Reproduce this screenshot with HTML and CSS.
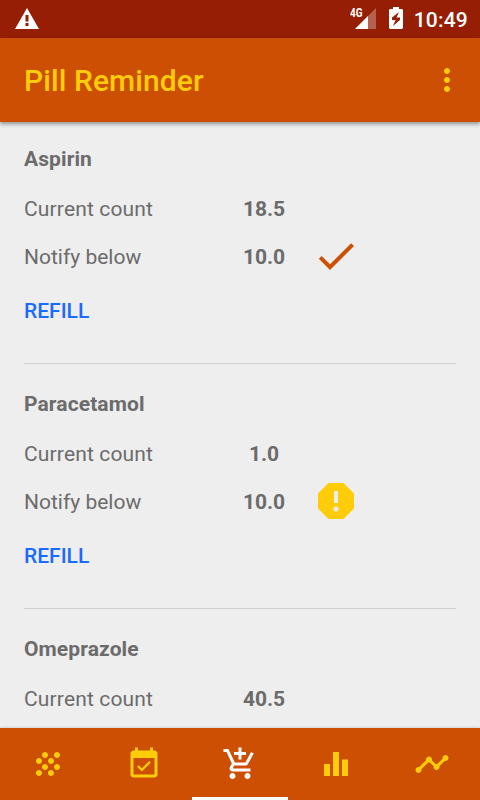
FILE: index.html
```html
<!DOCTYPE html>
<html lang="en">
<head>
    <meta charset="UTF-8">
    <meta name="viewport" content="width=device-width, initial-scale=1.0">
    <title>Pill Reminder</title>
    <link rel="stylesheet" href="styles.css">
</head>
<body>
    <div class="screen">
        <div class="status-bar">
            <svg class="status-warning" width="24" height="22" viewBox="0 0 24 22">
                <path fill="#fff" fill-rule="evenodd" d="M12 0L24 21H0zM10.500 7v6.500h3V7zM10.500 15v3h3v-3z"/>
            </svg>
            <div class="status-right">
                <div class="signal">
                    <span class="signal-type">4G</span>
                    <svg width="21" height="21" viewBox="0 0 21 21">
                        <path fill="#fff" fill-opacity="0.3" d="M21 0v21H0z"/>
                        <path fill="#fff" d="M13 8v13H0z"/>
                    </svg>
                </div>
                <svg class="battery" width="14" height="22" viewBox="0 0 14 22">
                    <path fill="#fff" fill-rule="evenodd" d="M4 0h6v2h3l1 1v18l-1 1H1l-1-1V3l1-1h3zM10 5L3 10.500V13h3.500L4 19l7-6v-2.500H7.500z"/>
                </svg>
                <span class="clock">10:49</span>
            </div>
        </div>

        <header class="app-bar">
            <h1>Pill Reminder</h1>
            <svg class="overflow" width="36" height="36" viewBox="0 0 24 24">
                <path d="M12 8c1.100 0 2-.9 2-2s-.9-2-2-2-2 .9-2 2 .9 2 2 2zm0 2c-1.100 0-2 .9-2 2s.9 2 2 2 2-.9 2-2-.9-2-2-2zm0 6c-1.100 0-2 .9-2 2s.9 2 2 2 2-.9 2-2-.9-2-2-2z"/>
            </svg>
        </header>

        <main class="medicines">
            <section class="medicine">
                <h2>Aspirin</h2>
                <div class="row">
                    <span class="label count">Current count</span>
                    <span class="value">18.5</span>
                </div>
                <div class="row">
                    <span class="label">Notify below</span>
                    <span class="value">10.0</span>
                    <svg class="state ok" width="48" height="48" viewBox="0 0 24 24">
                        <path d="M9 16.170L4.830 12l-1.420 1.410L9 19 21 7l-1.410-1.410z"/>
                    </svg>
                </div>
                <button class="refill">REFILL</button>
            </section>

            <section class="medicine">
                <h2>Paracetamol</h2>
                <div class="row">
                    <span class="label count">Current count</span>
                    <span class="value">1.0</span>
                </div>
                <div class="row">
                    <span class="label">Notify below</span>
                    <span class="value">10.0</span>
                    <svg class="state low" width="48" height="48" viewBox="0 0 24 24">
                        <path d="M15.730 3H8.270L3 8.270v7.460L8.270 21h7.460L21 15.730V8.270L15.730 3zM12 17.300c-.72 0-1.300-.58-1.300-1.300 0-.72.58-1.300 1.300-1.300.72 0 1.300.58 1.300 1.300 0 .72-.58 1.300-1.300 1.300zm1-4.300h-2V7h2v6z"/>
                    </svg>
                </div>
                <button class="refill">REFILL</button>
            </section>

            <section class="medicine">
                <h2>Omeprazole</h2>
                <div class="row">
                    <span class="label count">Current count</span>
                    <span class="value">40.5</span>
                </div>
            </section>
        </main>

        <nav class="tabs">
            <a class="tab">
                <svg width="36" height="36" viewBox="0 0 24 24">
                    <path d="M10 12c-1.100 0-2 .9-2 2s.9 2 2 2 2-.9 2-2-.9-2-2-2zM6 8c-1.100 0-2 .9-2 2s.9 2 2 2 2-.9 2-2-.9-2-2-2zm0 8c-1.100 0-2 .9-2 2s.9 2 2 2 2-.9 2-2-.9-2-2-2zm12-8c1.100 0 2-.9 2-2s-.9-2-2-2-2 .9-2 2 .9 2 2 2zm-4 8c-1.100 0-2 .9-2 2s.9 2 2 2 2-.9 2-2-.9-2-2-2zm4-4c-1.100 0-2 .9-2 2s.9 2 2 2 2-.9 2-2-.9-2-2-2zm-4-4c-1.100 0-2 .9-2 2s.9 2 2 2 2-.9 2-2-.9-2-2-2zm-4-4c-1.100 0-2 .9-2 2s.9 2 2 2 2-.9 2-2-.9-2-2-2z"/>
                </svg>
            </a>
            <a class="tab">
                <svg width="36" height="36" viewBox="0 0 24 24">
                    <path d="M16.530 11.060L15.470 10l-4.880 4.880-2.120-2.120-1.060 1.060L10.590 17l5.940-5.940zM19 3h-1V1h-2v2H8V1H6v2H5c-1.110 0-1.990.9-1.990 2L3 19c0 1.100.89 2 2 2h14c1.100 0 2-.9 2-2V5c0-1.100-.9-2-2-2zm0 16H5V8h14v11z"/>
                </svg>
            </a>
            <a class="tab active">
                <svg width="36" height="36" viewBox="0 0 24 24">
                    <path d="M11 9h2V6h3V4h-3V1h-2v3H8v2h3v3zm-4 9c-1.100 0-1.990.9-1.990 2S5.900 22 7 22s2-.9 2-2-.9-2-2-2zm10 0c-1.100 0-1.990.9-1.990 2s.89 2 1.990 2 2-.9 2-2-.9-2-2-2zm-9.830-3.250l.03-.12.9-1.630h7.450c.75 0 1.410-.41 1.750-1.030l3.860-7.010L19.420 4h-.01l-1.100 2-2.760 5H8.530l-.13-.27L6.160 6l-.95-2-.94-2H1v2h2l3.600 7.590-1.350 2.450c-.16.28-.25.61-.25.96 0 1.100.9 2 2 2h12v-2H7.420c-.13 0-.25-.11-.25-.25z"/>
                </svg>
            </a>
            <a class="tab">
                <svg width="36" height="36" viewBox="0 0 24 24">
                    <path d="M10 20h4V4h-4v16zm-6 0h4v-8H4v8zM16 9v11h4V9h-4z"/>
                </svg>
            </a>
            <a class="tab">
                <svg width="36" height="36" viewBox="0 0 24 24">
                    <path d="M23 8c0 1.100-.9 2-2 2-.18 0-.35-.02-.51-.07l-3.560 3.550c.05.16.07.34.07.52 0 1.100-.9 2-2 2s-2-.9-2-2c0-.18.02-.36.07-.52l-2.550-2.550c-.16.05-.34.07-.52.07s-.36-.02-.52-.07l-4.550 4.560c.05.16.07.33.07.51 0 1.100-.9 2-2 2s-2-.9-2-2 .9-2 2-2c.18 0 .35.02.51.07l4.560-4.550C8.020 9.360 8 9.180 8 9c0-1.100.9-2 2-2s2 .9 2 2c0 .18-.02.36-.07.52l2.550 2.550c.16-.05.34-.07.52-.07s.36.02.52.07l3.550-3.560C19.020 8.350 19 8.180 19 8c0-1.100.9-2 2-2s2 .9 2 2z"/>
                </svg>
            </a>
        </nav>
    </div>
</body>
</html>
```
FILE: styles.css
```css
body {
    margin: 0;
    font-family: Roboto, sans-serif;
    background-color: #eeeeee;
    color: #6b6b6b;
}

.screen {
    display: flex;
    flex-direction: column;
    width: 480px;
    height: 800px;
    overflow: hidden;
}

svg {
    display: block;
    flex-shrink: 0;
}

/* Status bar */
.status-bar {
    display: flex;
    flex-shrink: 0;
    justify-content: space-between;
    height: 38px;
    padding: 0 12px 0 15px;
    box-sizing: border-box;
    background-color: #961e04;
    color: #fff;
}

.status-warning {
    margin-top: 8px;
}

.status-right {
    display: flex;
}

.signal {
    display: flex;
    margin-right: 13px;
}

.signal-type {
    width: 5px;
    margin-top: 7px;
    font-size: 12px;
    line-height: 13px;
    font-weight: bold;
    transform: scaleX(0.83);
    transform-origin: left;
}

.signal svg {
    margin-top: 8px;
}

.battery {
    margin-top: 7px;
}

.clock {
    margin-left: 11px;
    font-size: 21px;
    font-weight: 500;
    line-height: 40px;
    letter-spacing: 0.2px;
}

/* App bar */
.app-bar {
    position: relative;
    display: flex;
    flex-shrink: 0;
    align-items: center;
    justify-content: space-between;
    height: 84px;
    padding: 0 15px 0 24px;
    box-sizing: border-box;
    background-color: #cc4f04;
    box-shadow: 0 2px 4px rgba(0,0,0,0.4);
}

.app-bar h1 {
    margin: 0;
    font-size: 30px;
    font-weight: 500;
    letter-spacing: 0.08px;
    color: #ffcc0a;
}

.overflow {
    fill: #ffcc0a;
}

/* Medicine list */
.medicines {
    flex: 1;
    min-height: 0;
    padding: 0 24px;
    overflow: hidden;
}

.medicine {
    height: 241px;
    border-bottom: 1px solid #cfcfcf;
}

.medicine + .medicine {
    height: 244px;
}

.medicine h2 {
    margin: 0;
    padding-top: 24px;
    font-size: 21px;
    font-weight: bold;
    line-height: 26px;
    letter-spacing: 0.1px;
}

.medicine + .medicine h2 {
    padding-top: 27px;
}

.row {
    display: flex;
    align-items: center;
    height: 48px;
    font-size: 21px;
}

.medicine h2 + .row {
    margin-top: 13px;
}

.label {
    width: 192px;
}

.label.count {
    letter-spacing: 0.15px;
}

.value {
    width: 96px;
    font-weight: bold;
    text-align: center;
}

.state {
    margin-top: -2px;
}

.state.ok {
    fill: #cc4f04;
}

.state.low {
    fill: #ffcc0a;
}

.refill {
    display: block;
    height: 48px;
    margin-top: 6px;
    padding: 0;
    border: none;
    background: none;
    font-family: inherit;
    font-size: 21px;
    font-weight: 500;
    color: #1a6bff;
    cursor: pointer;
}

/* Bottom tabs */
.tabs {
    position: relative;
    display: grid;
    grid-template-columns: repeat(5, 1fr);
    flex-shrink: 0;
    height: 72px;
    background-color: #cc4f04;
    box-shadow: 0 0 3px rgba(0,0,0,0.2);
}

.tab {
    display: flex;
    align-items: center;
    justify-content: center;
    box-sizing: border-box;
    padding-top: 3px;
    border-bottom: 3px solid transparent;
    fill: #ffcc0a;
}

.tab.active {
    border-bottom-color: #fff;
    fill: #fff;
}
```
